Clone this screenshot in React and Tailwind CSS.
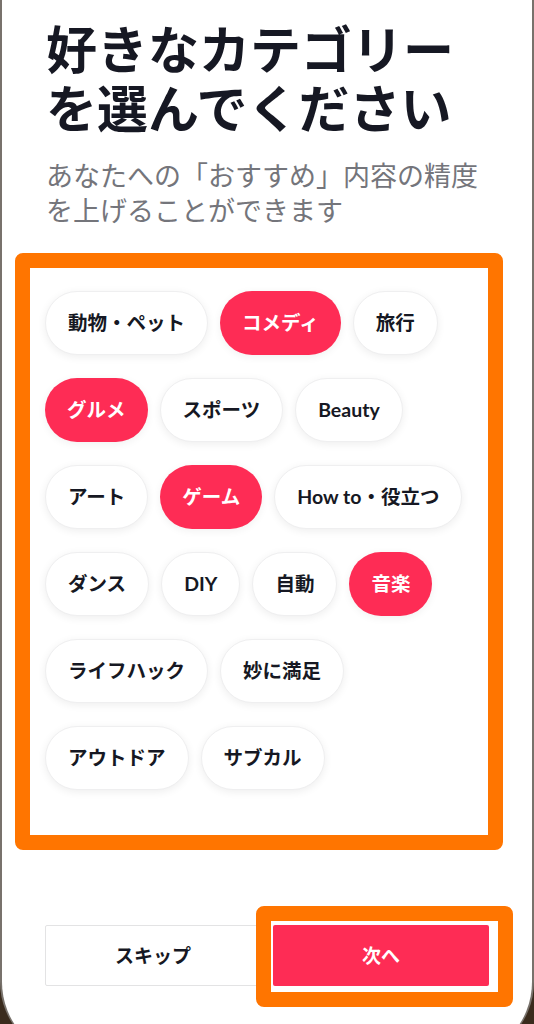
import React from "react";

const rows = [
  [["動物・ペット", false], ["コメディ", true], ["旅行", false]],
  [["グルメ", true], ["スポーツ", false], ["Beauty", false]],
  [["アート", false], ["ゲーム", true], ["How to・役立つ", false]],
  [["ダンス", false], ["DIY", false], ["自動", false], ["音楽", true]],
  [["ライフハック", false], ["妙に満足", false]],
  [["アウトドア", false], ["サブカル", false]],
];

const font = { fontFamily: '"Noto Sans CJK JP", sans-serif' };

function Chip({ label, on }) {
  return (
    <div
      className={
        on
          ? "h-[64px] px-[22px] flex items-center rounded-full bg-[#fe2c55] text-white text-[19.5px] font-bold font-['Lato','Noto_Sans_CJK_JP',sans-serif] shadow-[0_2px_8px_rgba(0,0,0,0.06)]"
          : "h-[64px] px-[22px] flex items-center rounded-full bg-white border border-[#efeff0] text-[#161823] text-[19.5px] font-bold font-['Lato','Noto_Sans_CJK_JP',sans-serif] shadow-[0_2px_8px_rgba(0,0,0,0.07)]"
      }
    >
      {label}
    </div>
  );
}

export default function App() {
  return (
    <div className="w-[534px] h-[1024px] bg-[#3a2b1d] overflow-hidden" style={font}>
      <div className="h-[1058px] bg-white border-x-2 border-[#78726c] rounded-b-[76px] flex flex-col">
        <div className="pl-[44px] pt-[18px] text-[#161823] text-[51px] leading-[59px] font-bold">
          <div>好きなカテゴリー</div>
          <div>を選んでください</div>
        </div>
        <div className="pl-[44px] mt-[21px] text-[#74757b] text-[27px] leading-[35px]">
          <div>あなたへの「おすすめ」内容の精度</div>
          <div>を上げることができます</div>
        </div>
        <div className="ml-[13px] mt-[26px] w-[488px] h-[597px] border-[15px] border-[#ff7500] rounded-[8px] pl-[15px] pt-[23px] flex flex-col gap-[23px]">
          {rows.map((r, i) => (
            <div key={i} className="flex gap-[12px]">
              {r.map(([l, on]) => (
                <Chip key={l} label={l} on={on} />
              ))}
            </div>
          ))}
        </div>
        <div className="relative mt-[75px] pl-[43px] flex gap-[12px]">
          <div className="w-[216px] h-[61px] border border-[#e3e3e4] rounded-[2px] flex items-center justify-center text-[#161823] text-[19px] font-bold">
            スキップ
          </div>
          <div className="w-[216px] h-[61px] bg-[#fe2c55] rounded-[2px] flex items-center justify-center text-white text-[19px] font-semibold">
            次へ
          </div>
          <div className="absolute left-[254px] top-[-19px] w-[257px] h-[101px] border-[15px] border-[#ff7500] rounded-[8px]"></div>
        </div>
      </div>
    </div>
  );
}
